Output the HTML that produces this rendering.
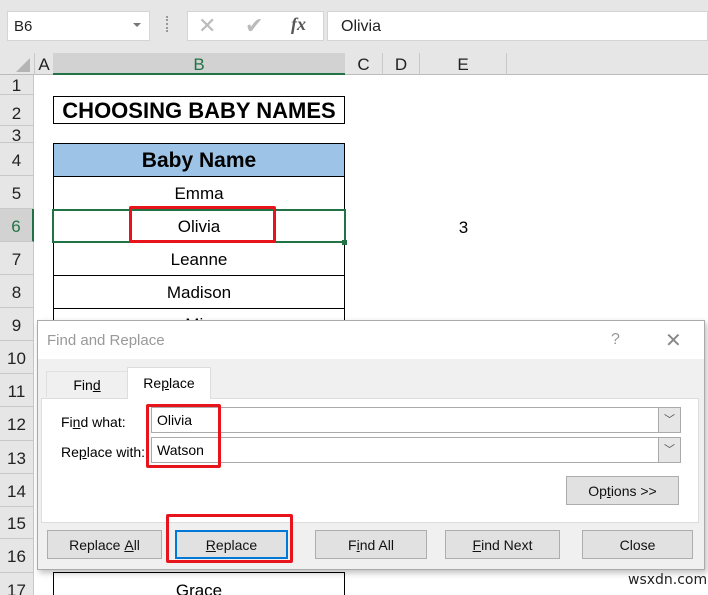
<!DOCTYPE html>
<html><head><style>
*{margin:0;padding:0;box-sizing:border-box}
html,body{width:708px;height:595px;overflow:hidden}
body{background:#fff;font-family:"Liberation Sans",Arial,sans-serif;position:relative}
.a{position:absolute}
.rh{position:absolute;left:0;width:34px;background:#e6e6e6;border-bottom:1px solid #c8c8c8;border-right:1px solid #c8c8c8;font-size:17px;color:#222;text-align:center;display:flex;align-items:center;justify-content:center;padding-top:3px}
.cell{position:absolute;left:53px;width:292px;border:1px solid #000;border-top:none;text-align:center;font-size:17px;color:#000;display:flex;align-items:center;justify-content:center}
.btn{position:absolute;height:29px;background:#e1e1e1;border:1px solid #adadad;font-family:"Liberation Sans",sans-serif;font-size:14px;color:#111;display:flex;align-items:center;justify-content:center}
.dlg{font-family:"Liberation Sans",sans-serif}
.red{position:absolute;border:3px solid #e8141c;border-radius:2px}
</style></head><body>
<div class="a" style="left:0;top:0;width:708px;height:53px;background:#e6e6e6"></div>
<div class="a" style="left:7px;top:11px;width:143px;height:30px;background:#fff;border:1px solid #d4d4d4;font-size:15px;padding:6px 6px;color:#222">B6<span style="position:absolute;right:8px;top:11px;border-left:4px solid transparent;border-right:4px solid transparent;border-top:4px solid #777"></span></div>
<div class="a" style="left:166px;top:16px;width:3px;height:16px;border-left:2px dotted #999"></div>
<div class="a" style="left:187px;top:11px;width:137px;height:30px;background:#fff;border:1px solid #d4d4d4"></div>
<div class="a" style="left:198px;top:13px;font-size:22px;color:#bbb">✕</div>
<div class="a" style="left:245px;top:13px;font-size:22px;color:#bbb">✔</div>
<div class="a" style="left:291px;top:14px;font-size:18px;color:#555;font-family:'Liberation Serif',serif;font-style:italic;font-weight:bold">fx</div>
<div class="a" style="left:327px;top:11px;width:381px;height:30px;background:#fff;border:1px solid #d4d4d4;font-size:16px;padding:6px 13px;color:#222">Olivia</div>
<div class="a" style="left:0;top:53px;width:708px;height:22px;background:#e6e6e6;border-bottom:1px solid #bbb"></div>
<div class="a" style="left:16px;top:58px;width:0;height:0;border-left:14px solid transparent;border-bottom:14px solid #b4b4b4"></div>
<div class="a" style="left:34px;top:53px;width:19px;height:22px;border-left:1px solid #c8c8c8;font-size:17px;text-align:center;line-height:24px;color:#222">A</div>
<div class="a" style="left:53px;top:53px;width:292px;height:22px;background:#d2d2d2;border-bottom:2px solid #217346;font-size:17px;text-align:center;line-height:24px;color:#217346">B</div>
<div class="a" style="left:345px;top:53px;width:38px;height:22px;border-right:1px solid #c8c8c8;font-size:17px;text-align:center;line-height:24px;color:#222">C</div>
<div class="a" style="left:383px;top:53px;width:37px;height:22px;border-right:1px solid #c8c8c8;font-size:17px;text-align:center;line-height:24px;color:#222">D</div>
<div class="a" style="left:420px;top:53px;width:87px;height:22px;border-right:1px solid #c8c8c8;font-size:17px;text-align:center;line-height:24px;color:#222">E</div>
<div class="rh" style="top:75px;height:20px">1</div>
<div class="rh" style="top:95px;height:31px;align-items:flex-end;padding-bottom:1px">2</div>
<div class="rh" style="top:126px;height:17px;overflow:hidden">3</div>
<div class="rh" style="top:143px;height:33px">4</div>
<div class="rh" style="top:176px;height:33px">5</div>
<div class="rh" style="top:209px;height:33px;background:#d2d2d2;color:#217346;border-right:2px solid #217346">6</div>
<div class="rh" style="top:242px;height:33px">7</div>
<div class="rh" style="top:275px;height:33px">8</div>
<div class="rh" style="top:308px;height:33px">9</div>
<div class="rh" style="top:341px;height:33px">10</div>
<div class="rh" style="top:374px;height:33px">11</div>
<div class="rh" style="top:407px;height:34px">12</div>
<div class="rh" style="top:441px;height:33px">13</div>
<div class="rh" style="top:474px;height:33px">14</div>
<div class="rh" style="top:507px;height:32px">15</div>
<div class="rh" style="top:539px;height:34px">16</div>
<div class="rh" style="top:573px;height:33px">17</div>
<div class="a" style="left:53px;top:96px;width:292px;height:28px;border:1px solid #000;font-size:22px;font-weight:bold;text-align:center;line-height:28px">CHOOSING BABY NAMES</div>
<div class="cell" style="top:143px;height:34px;border-top:1px solid #000;background:#9dc3e6;font-size:21px;font-weight:bold;padding-top:2px">Baby Name</div>
<div class="cell" style="top:177px;height:33px;padding-top:1px">Emma</div>
<div class="cell" style="top:210px;height:33px;padding-top:1px">Olivia</div>
<div class="cell" style="top:243px;height:33px;padding-top:1px">Leanne</div>
<div class="cell" style="top:276px;height:33px;padding-top:1px">Madison</div>
<div class="cell" style="top:309px;height:33px;align-items:flex-start;padding-top:6px">Mia</div>
<div class="cell" style="top:572px;height:30px;border-top:1px solid #000;align-items:flex-start;padding-top:8px">Grace</div>
<div class="a" style="left:52px;top:209px;width:294px;height:34px;border:2px solid #217346"></div>
<div class="a" style="left:342px;top:240px;width:5px;height:5px;background:#217346"></div>
<div class="red" style="left:129px;top:206px;width:147px;height:37px"></div>
<div class="a" style="left:420px;top:218px;width:87px;font-size:17px;text-align:center">3</div>
<div class="a dlg" style="left:37px;top:320px;width:668px;height:250px;background:#f0f0f0;border:1px solid #aaa;box-shadow:2px 3px 6px rgba(0,0,0,.25)">
 <div class="a" style="left:0;top:0;width:666px;height:38px;background:#fff"></div>
 <div class="a" style="left:9px;top:11px;font-size:15px;color:#999">Find and Replace</div>
 <div class="a" style="left:573px;top:10px;font-size:16px;color:#999">?</div>
 <div class="a" style="left:627px;top:7px;font-size:20px;color:#888">✕</div>
 <div class="a" style="left:8px;top:50px;width:82px;height:26px;border:1px solid #e0e0e0;border-bottom:none;font-size:14px;text-align:center;line-height:26px">Fin<u>d</u></div>
 <div class="a" style="left:89px;top:46px;width:84px;height:32px;background:#fff;border:1px solid #ddd;border-bottom:none;font-size:14px;text-align:center;line-height:30px;z-index:2">Re<u>p</u>lace</div>
 <div class="a" style="left:3px;top:77px;width:658px;height:125px;background:#fff;border:1px solid #ddd"></div>
 <div class="a" style="left:23px;top:93px;font-size:14px">Fi<u>n</u>d what:</div>
 <div class="a" style="left:23px;top:123px;font-size:14px">Re<u>p</u>lace with:</div>
 <div class="a" style="left:113px;top:86px;width:530px;height:26px;border:1px solid #aaa;background:#fff;font-size:14px;padding:4px 5px">Olivia</div>
 <div class="a" style="left:620px;top:86px;width:23px;height:26px;border:1px solid #aaa;background:#e6e6e6;font-size:11px;text-align:center;line-height:24px;color:#555">﹀</div>
 <div class="a" style="left:113px;top:116px;width:530px;height:26px;border:1px solid #aaa;background:#fff;font-size:14px;padding:4px 5px">Watson</div>
 <div class="a" style="left:620px;top:116px;width:23px;height:26px;border:1px solid #aaa;background:#e6e6e6;font-size:11px;text-align:center;line-height:24px;color:#555">﹀</div>
 <div class="btn" style="left:528px;top:155px;width:113px;height:29px">Op<u>t</u>ions &gt;&gt;</div>
 <div class="btn" style="left:9px;top:209px;width:115px">Replace&nbsp;<u>A</u>ll</div>
 <div class="btn" style="left:137px;top:209px;width:113px;border:2px solid #0078d7"><u>R</u>eplace</div>
 <div class="btn" style="left:277px;top:209px;width:112px">F<u>i</u>nd All</div>
 <div class="btn" style="left:407px;top:209px;width:115px"><u>F</u>ind Next</div>
 <div class="btn" style="left:544px;top:209px;width:111px">Close</div>
</div>
<div class="red" style="left:146px;top:404px;width:75px;height:64px"></div>
<div class="red" style="left:166px;top:514px;width:127px;height:49px"></div>
<div class="a" style="left:628px;top:572px;font-size:14px;color:#222;font-family:'DejaVu Sans',sans-serif">wsxdn.com</div>
</body></html>
